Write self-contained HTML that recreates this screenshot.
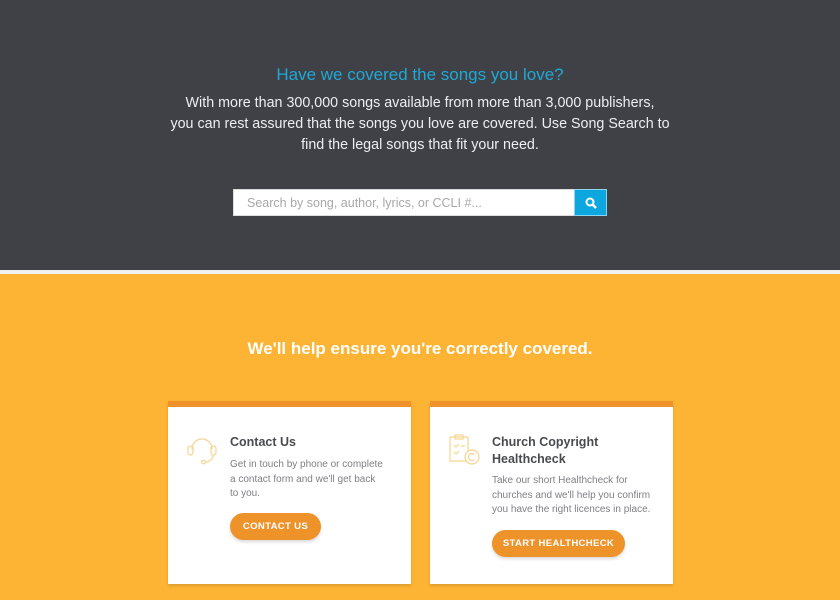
<!DOCTYPE html>
<html><head><meta charset="utf-8"><style>
*{margin:0;padding:0;box-sizing:border-box}
body{width:840px;height:600px;overflow:hidden;font-family:"Liberation Sans",sans-serif;background:#fdb333}
.top{position:absolute;left:0;top:0;width:840px;height:270px;background:#404146}
.line{position:absolute;left:0;top:270px;width:840px;height:4px;background:#f1f1f3}
h2{position:absolute;top:65px;left:0;width:840px;text-align:center;color:#1fa8d6;font-weight:normal;font-size:17px}
.p{position:absolute;top:93px;left:100px;width:640px;text-align:center;color:#eceef0;font-size:14.3px;line-height:21px;white-space:nowrap}
.search{position:absolute;left:233px;top:189px;width:374px;height:27px;background:#fff;border:1px solid #ddd}
.search span{position:absolute;left:13px;top:6px;font-size:12.5px;color:#a8a8a8}
.btn{position:absolute;right:-1px;top:-1px;width:33px;height:27px;background:#0ca7df;border:1px solid #8fd4ef}
h3{position:absolute;top:339px;left:0;width:840px;text-align:center;color:#fff;font-size:17px}
.card{position:absolute;top:401px;width:243px;height:183px;background:#fff;border-top:6px solid #f0922b;box-shadow:0 2px 3px rgba(0,0,0,.12)}
.card h4{position:absolute;left:62px;top:27px;font-size:12.5px;color:#4a4b50;line-height:17px}
.card p{position:absolute;left:62px;font-size:10px;color:#808085;line-height:14.7px;white-space:nowrap}
.cb{position:absolute;left:62px;height:27px;border-radius:14px;background:#ee922a;color:#fff;font-weight:bold;font-size:9.6px;letter-spacing:.3px;text-align:center;line-height:27px;box-shadow:0 2px 3px rgba(0,0,0,.15)}
</style></head><body>
<div class="top"></div><div class="line"></div>
<h2>Have we covered the songs you love?</h2>
<div class="p">With more than 300,000 songs available from more than 3,000 publishers,<br>you can rest assured that the songs you love are covered. Use Song Search to<br>find the legal songs that fit your need.</div>
<div class="search"><span>Search by song, author, lyrics, or CCLI #...</span>
<div class="btn"><svg width="33" height="27" viewBox="0 0 33 27"><circle cx="15" cy="12" r="3.5" fill="none" stroke="#fff" stroke-width="2"/><path d="M17.5 14.5l3.5 3.5" stroke="#fff" stroke-width="2.5"/></svg></div></div>
<h3>We'll help ensure you're correctly covered.</h3>
<div class="card" style="left:168px">
<svg style="position:absolute;left:17px;top:25px" width="36" height="36" viewBox="0 0 36 36" fill="none" stroke="#f6d490" stroke-width="1.2"><path d="M7 17a10 10 0 0 1 20 0"/><rect x="3" y="14" width="5" height="9" rx="2.5"/><rect x="26" y="14" width="5" height="9" rx="2.5"/><path d="M28 23c0 5-4 7-8 7"/><circle cx="18.5" cy="30" r="1.8"/></svg>
<h4>Contact Us</h4>
<p style="top:51px">Get in touch by phone or complete<br>a contact form and we'll get back<br>to you.</p>
<div class="cb" style="top:106px;width:91px">CONTACT US</div>
</div>
<div class="card" style="left:430px">
<svg style="position:absolute;left:17px;top:25px" width="36" height="36" viewBox="0 0 36 36" fill="none" stroke="#f6d490" stroke-width="1.2"><rect x="3" y="5" width="18" height="24" rx="1"/><rect x="8" y="3" width="8" height="4"/><path d="M7 13l2 2 3-3M7 20l2 2 3-3M14 14h4"/><circle cx="25" cy="25" r="7" fill="#fff"/><path d="M27.5 22.5a3.5 3.5 0 1 0 0 5"/></svg>
<h4>Church Copyright<br>Healthcheck</h4>
<p style="top:67px">Take our short Healthcheck for<br>churches and we'll help you confirm<br>you have the right licences in place.</p>
<div class="cb" style="top:123px;width:133px">START HEALTHCHECK</div>
</div>
</body></html>
